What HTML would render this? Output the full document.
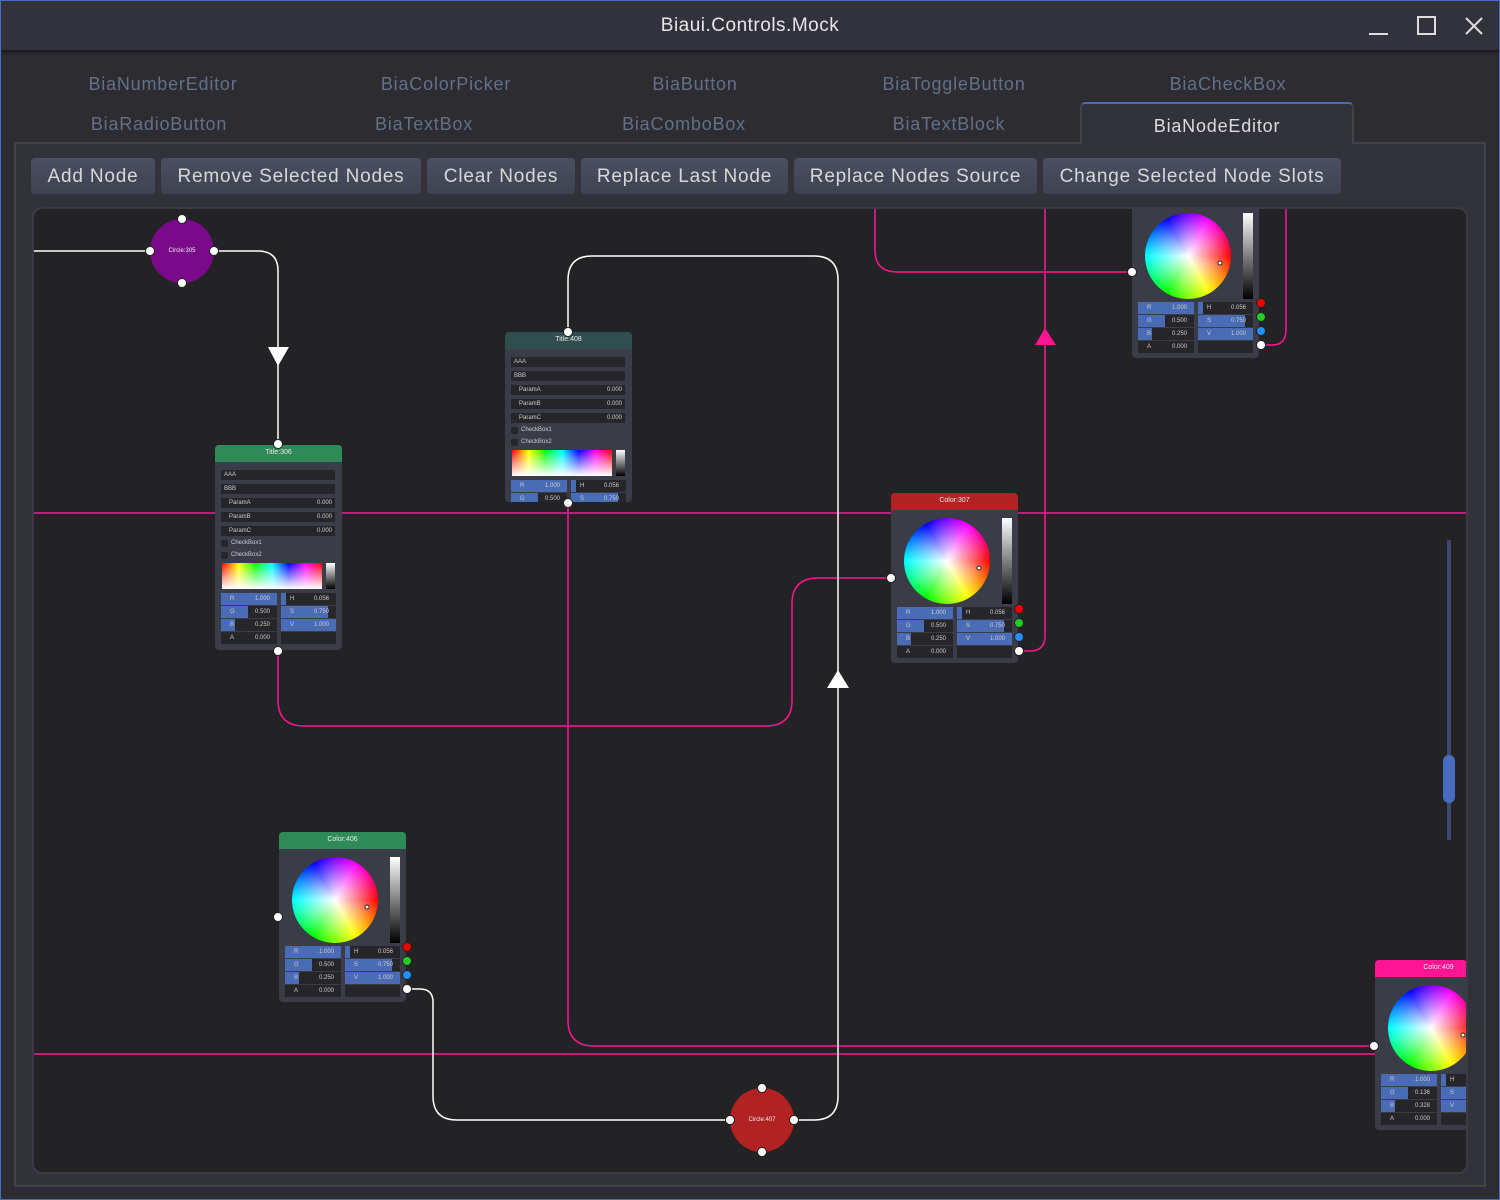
<!DOCTYPE html>
<html><head><meta charset="utf-8"><style>
*{box-sizing:border-box;margin:0;padding:0}
body{width:1500px;height:1200px;background:#2c2c31;font-family:"Liberation Sans",sans-serif;position:relative;overflow:hidden}
.frame{position:absolute;left:0;top:0;width:1500px;height:1200px;box-shadow:inset 0 0 0 1px #4a6cc0;z-index:50;pointer-events:none}
.tb{position:absolute;left:0;top:0;width:1500px;height:50px;background:#32323c;box-shadow:0 2px 4px rgba(0,0,0,.5)}
.tb .t{position:absolute;left:0;width:1500px;top:15px;text-align:center;color:#e6e6e6;font-size:19px;letter-spacing:.5px}
.tab{position:absolute;color:#627089;font-size:18px;letter-spacing:.8px;transform:translateX(-50%);white-space:nowrap}
.seltab{position:absolute;left:1080px;top:102px;width:274px;height:42px;background:#31323a;border:2px solid #40424c;border-top:2px solid #4a6cc0;border-bottom:none;border-radius:5px 5px 0 0;color:#dcdcdc;font-size:18px;text-align:center;padding-top:12px;letter-spacing:.8px;z-index:2}
.panel{position:absolute;left:14px;top:142px;width:1472px;height:1045px;background:#31323a;border:2px solid #40424c}
.btn{position:absolute;top:158px;height:36px;background:linear-gradient(#4a5060,#3e4352);border-radius:4px;color:#d8d8d8;font-size:19px;letter-spacing:.8px;text-align:center;padding-top:8px}
.canvas{position:absolute;left:32px;top:207px;width:1436px;height:967px;background:#232326;border:2px solid #3a3b44;border-radius:10px;overflow:hidden}
.node{position:absolute;background:#3a3c48;border-radius:4px;overflow:hidden}
.hd{height:17px;color:#e8e8e8;font-size:7px;text-align:center;padding-top:4px}
.f{position:absolute;height:10px;background:#26262a;color:#ccc;font-size:6px;line-height:10px;padding:0 3px}
.r{float:right}
.wheel{position:absolute;border-radius:50%;background:radial-gradient(circle,#fff 0%,rgba(255,255,255,0) 70%),conic-gradient(from 90deg,red,yellow,lime,cyan,blue,magenta,red)}
.bar{position:absolute;background:linear-gradient(#fff,#000)}
.port{position:absolute;width:10px;height:10px;border-radius:50%;background:#fff;border:1px solid #222;transform:translate(-50%,-50%)}
.circ{position:absolute;width:64px;height:64px;border-radius:50%;color:#eee;font-size:6px;text-align:center;line-height:64px;transform:translate(-50%,-50%)}
svg{position:absolute;left:0;top:0}
</style></head><body>
<div class="frame"></div>
<div class="tb"><div class="t">Biaui.Controls.Mock</div>
<svg width="1500" height="50"><path d="M1369 34H1388" stroke="#ddd" stroke-width="2"/><rect x="1418" y="17" width="17" height="17" fill="none" stroke="#ddd" stroke-width="2"/><path d="M1466 18L1482 34M1482 18L1466 34" stroke="#ddd" stroke-width="2"/></svg></div>
<div class="panel"></div>
<div class="tab" style="left:163px;top:74px">BiaNumberEditor</div>
<div class="tab" style="left:446px;top:74px">BiaColorPicker</div>
<div class="tab" style="left:695px;top:74px">BiaButton</div>
<div class="tab" style="left:954px;top:74px">BiaToggleButton</div>
<div class="tab" style="left:1228px;top:74px">BiaCheckBox</div>
<div class="tab" style="left:159px;top:114px">BiaRadioButton</div>
<div class="tab" style="left:424px;top:114px">BiaTextBox</div>
<div class="tab" style="left:684px;top:114px">BiaComboBox</div>
<div class="tab" style="left:949px;top:114px">BiaTextBlock</div>
<div class="seltab">BiaNodeEditor</div>
<div class="btn" style="left:31px;width:124px">Add Node</div>
<div class="btn" style="left:161px;width:260px">Remove Selected Nodes</div>
<div class="btn" style="left:427px;width:148px">Clear Nodes</div>
<div class="btn" style="left:581px;width:207px">Replace Last Node</div>
<div class="btn" style="left:794px;width:243px">Replace Nodes Source</div>
<div class="btn" style="left:1043px;width:298px">Change Selected Node Slots</div>
<div class="canvas" id="cv"></div>
<script>
var cv=document.getElementById('cv');var OX=34,OY=209;var h='';
function P(x,y){return '<div class="port" style="left:'+(x-OX)+'px;top:'+(y-OY)+'px"></div>'}
function rgb(x,y,vals,hsv){var s='';var L=['R','G','B','A'],W=[56,27,14,0];var H=['H','S','V'],HW=[5,47,55];
for(var i=0;i<4;i++){s+='<div class="f" style="left:'+x+'px;top:'+(y+i*13)+'px;width:56px;height:12px;line-height:12px;background:linear-gradient(90deg,#4a6cb5 '+W[i]+'px,#26262a '+W[i]+'px)"><span style="margin-left:6px">'+L[i]+'</span><span class="r" style="margin-right:4px">'+vals[i]+'</span></div>';}
for(var i=0;i<4;i++){s+='<div class="f" style="left:'+(x+60)+'px;top:'+(y+i*13)+'px;width:55px;height:12px;line-height:12px;background:'+(i<3?'linear-gradient(90deg,#4a6cb5 '+HW[i]+'px,#26262a '+HW[i]+'px)':'#26262a')+'">'+(i<3?'<span style="margin-left:6px">'+H[i]+'</span><span class="r" style="margin-right:4px">'+hsv[i]+'</span>':'')+'</div>';}return s}
function title(x,y,hgt,name,col){x-=OX;y-=OY;var s='<div class="node" style="left:'+x+'px;top:'+y+'px;width:127px;height:'+hgt+'px"><div class="hd" style="background:'+col+'">'+name+'</div>';
s+='<div class="f" style="left:6px;top:25px;width:114px">AAA</div><div class="f" style="left:6px;top:39px;width:114px">BBB</div>';
['ParamA','ParamB','ParamC'].forEach(function(p,i){s+='<div class="f" style="left:6px;top:'+(53+i*14)+'px;width:114px"><span style="margin-left:5px">'+p+'</span><span class="r">0.000</span></div>'});
s+='<div class="f" style="left:6px;top:95px;width:7px;height:7px;border-radius:2px"></div><div style="position:absolute;left:16px;top:95px;font-size:6px;color:#ccc">CheckBox1</div>';
s+='<div class="f" style="left:6px;top:107px;width:7px;height:7px;border-radius:2px"></div><div style="position:absolute;left:16px;top:107px;font-size:6px;color:#ccc">CheckBox2</div>';
s+='<div style="position:absolute;left:7px;top:118px;width:100px;height:26px;background:linear-gradient(rgba(255,255,255,0),#fff),linear-gradient(90deg,red,yellow,lime,cyan,blue,magenta,red)"></div>';
s+='<div class="bar" style="left:111px;top:118px;width:9px;height:26px"></div>';
s+=rgb(6,148,['1.000','0.500','0.250','0.000'],['0.056','0.750','1.000']);s+='</div>';return s}
function color(x,y,name,col,vals,cut){x-=OX;y-=OY;var s='<div class="node" style="left:'+x+'px;top:'+y+'px;width:'+(cut||127)+'px;height:170px"><div class="hd" style="background:'+col+';width:127px">'+name+'</div>';
s+='<div class="wheel" style="left:13px;top:25px;width:86px;height:86px"></div><div class="port" style="left:88px;top:75px;width:5px;height:5px"></div>';
s+='<div class="bar" style="left:111px;top:25px;width:10px;height:86px"></div>';
s+=rgb(6,114,vals||['1.000','0.500','0.250','0.000'],['0.056','0.750','1.000']);s+='</div>';return s}
h+='<svg width="1436" height="967" viewBox="34 209 1436 967" style="position:absolute;left:0;top:0">';
var pk='fill="none" stroke="#ff1493" stroke-width="1.5"',wt='fill="none" stroke="#fff" stroke-width="1.5"';
h+='<path d="M34 513H1468M34 1054H1468" '+pk+'/>';
h+='<path d="M278 651V700Q278 726 304 726H766Q792 726 792 700V604Q792 578 818 578H891" '+pk+'/>';
h+='<path d="M568 503V1020Q568 1046 594 1046H1374" '+pk+'/>';
h+='<path d="M1019 651H1030Q1045 651 1045 636V209" '+pk+'/>';
h+='<path d="M875 209V250Q875 272 897 272H1132" '+pk+'/>';
h+='<path d="M1261 345H1272Q1286 345 1286 330V209" '+pk+'/>';
h+='<path d="M1035 345L1045 328L1056 345Z" fill="#ff1493"/>';
h+='<path d="M34 251H150M214 251H258Q278 251 278 271V444" '+wt+'/>';
h+='<path d="M268 347H289L278 366Z" fill="#fff"/>';
h+='<path d="M568 332V280Q568 256 592 256H814Q838 256 838 280V1096Q838 1120 814 1120H794" '+wt+'/>';
h+='<path d="M827 688H849L838 670Z" fill="#fff"/>';
h+='<path d="M407 989H420Q433 989 433 1002V1096Q433 1120 457 1120H730" '+wt+'/>';
h+='</svg>';
h+='<div class="circ" style="left:'+(182-OX)+'px;top:'+(251-OY)+'px;background:#7a0a8a">Circle:305</div>';
h+='<div class="circ" style="left:'+(762-OX)+'px;top:'+(1120-OY)+'px;background:#b22222">Circle:407</div>';
h+=P(182,219)+P(182,283)+P(150,251)+P(214,251)+P(762,1088)+P(762,1152)+P(730,1120)+P(794,1120);
h+=title(215,445,205,'Title:306','#2e8b57');
h+=title(505,332,170,'Title:408','#2f4f4f');
h+=P(278,444)+P(278,651)+P(568,332)+P(568,503);
h+=color(891,493,'Color:307','#b22222');
h+=color(1132,188,'','#b22222');
h+=color(279,832,'Color:406','#2e8b57');
h+=color(1375,960,'Color:409','#ff1493',['1.000','0.136','0.328','0.000'],92);
function outs(x,y){return '<div class="port" style="left:'+(x-OX)+'px;top:'+(y-OY)+'px;background:#e00"></div><div class="port" style="left:'+(x-OX)+'px;top:'+(y+14-OY)+'px;background:#2c2"></div><div class="port" style="left:'+(x-OX)+'px;top:'+(y+28-OY)+'px;background:#1e90ff"></div>'+P(x,y+42)}
h+=P(891,578)+outs(1019,609)+P(1132,272)+outs(1261,303)+P(278,917)+outs(407,947)+P(1374,1046);
h+='<div style="position:absolute;left:'+(1447-OX)+'px;top:'+(540-OY)+'px;width:4px;height:300px;background:#3b4a6e"></div>';
h+='<div style="position:absolute;left:'+(1443-OX)+'px;top:'+(755-OY)+'px;width:12px;height:48px;border-radius:6px;background:#4a6cc0"></div>';
cv.innerHTML=h;
</script>
</body></html>
